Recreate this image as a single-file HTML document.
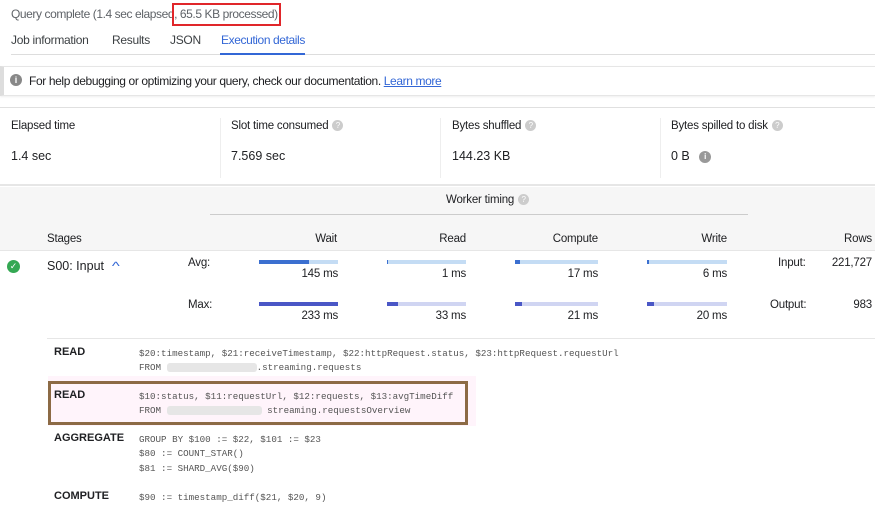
<!DOCTYPE html>
<html><head><meta charset="utf-8"><style>
*{margin:0;padding:0;box-sizing:border-box}
body{width:875px;height:516px;background:#fff;font-family:"Liberation Sans",sans-serif;color:#202124;position:relative;overflow:hidden}
.a{position:absolute;white-space:nowrap}
.s{font-size:11.5px;letter-spacing:-0.2px}
.m{font-family:"Liberation Mono",monospace;font-size:9.2px;color:#555}
.q{display:inline-block;width:11px;height:11px;border-radius:50%;background:#ccc;color:#fff;font-size:8px;text-align:center;line-height:11px;vertical-align:middle;margin-left:4px}
.bar{position:absolute;height:4px;background:#c4dcf4}
.bar i{position:absolute;left:0;top:0;height:4px;background:#3b6fd0}
.bar2{background:#d0d5f2}.bar2 i{background:#4a57c6}
.r{text-align:right}
.blur{display:inline-block;height:9px;background:#e6e6e6;border-radius:3px;vertical-align:middle}
</style></head><body>
<div class="a" style="left:11px;top:7px;font-size:12px;letter-spacing:-0.42px;color:#5f6368">Query complete (1.4 sec elapsed, 65.5 KB processed)</div>
<div class="a" style="left:172px;top:3px;width:109px;height:23px;border:2px solid #e0262a"></div>
<div class="a" style="left:11px;top:33px;font-size:12px;letter-spacing:-0.3px;color:#3c4043">Job information</div>
<div class="a" style="left:112px;top:33px;font-size:12px;letter-spacing:-0.3px;color:#3c4043">Results</div>
<div class="a" style="left:170px;top:33px;font-size:12px;letter-spacing:-0.3px;color:#3c4043">JSON</div>
<div class="a" style="left:221px;top:33px;font-size:12px;letter-spacing:-0.4px;color:#3367d6">Execution details</div>
<div class="a" style="left:11px;top:54px;width:864px;height:1px;background:#ddd"></div>
<div class="a" style="left:220px;top:53px;width:85px;height:2px;background:#3367d6"></div>
<div class="a" style="left:0;top:66px;width:875px;height:30px;background:#fff;border-top:1px solid #e6e6e6;border-bottom:1px solid #e6e6e6;border-left:4px solid #ddd;box-shadow:0 1px 2px #eee"></div>
<div class="a" style="left:10px;top:74px;width:12px;height:12px;border-radius:50%;background:#888;color:#fff;font-size:9px;text-align:center;line-height:12px;font-weight:bold">i</div>
<div class="a" style="left:29px;top:74px;font-size:12px;letter-spacing:-0.38px">For help debugging or optimizing your query, check our documentation. <span style="color:#3367d6;text-decoration:underline">Learn more</span></div>
<div class="a" style="left:0;top:107px;width:875px;height:79px;border-top:1px solid #e0e0e0;border-bottom:2px solid #e6e6e6"></div>
<div class="a s" style="left:11px;top:120px">Elapsed time</div>
<div class="a" style="left:11px;top:149px;font-size:12.5px">1.4 sec</div>
<div class="a" style="left:220px;top:118px;width:1px;height:60px;background:#eee"></div>
<div class="a s" style="left:231px;top:120px">Slot time consumed<span class="q">?</span></div>
<div class="a" style="left:231px;top:149px;font-size:12.5px">7.569 sec</div>
<div class="a" style="left:440px;top:118px;width:1px;height:60px;background:#eee"></div>
<div class="a s" style="left:452px;top:120px">Bytes shuffled<span class="q">?</span></div>
<div class="a" style="left:452px;top:149px;font-size:12.5px">144.23 KB</div>
<div class="a" style="left:660px;top:118px;width:1px;height:60px;background:#eee"></div>
<div class="a s" style="left:671px;top:120px">Bytes spilled to disk<span class="q">?</span></div>
<div class="a" style="left:671px;top:149px;font-size:12.5px">0 B <span class="q" style="background:#999;width:12px;height:12px;line-height:12px;font-weight:bold;margin-left:6px">i</span></div>
<div class="a" style="left:0;top:187px;width:875px;height:63px;background:#f6f6f6"></div>
<div class="a s" style="left:446px;top:194px">Worker timing<span class="q">?</span></div>
<div class="a" style="left:210px;top:214px;width:538px;height:1px;background:#ccc"></div>
<div class="a s" style="left:47px;top:233px">Stages</div>
<div class="a s r" style="left:280px;top:233px;width:57px">Wait</div>
<div class="a s r" style="left:400px;top:233px;width:66px">Read</div>
<div class="a s r" style="left:500px;top:233px;width:98px">Compute</div>
<div class="a s r" style="left:650px;top:233px;width:77px">Write</div>
<div class="a s r" style="left:800px;top:233px;width:72px">Rows</div>
<div class="a" style="left:0;top:250px;width:875px;height:1px;background:#e6e6e6"></div>
<div class="a" style="left:7px;top:260px;width:13px;height:13px;border-radius:50%;background:#34a853;color:#fff;font-size:9px;text-align:center;line-height:13px">✓</div>
<div class="a" style="left:47px;top:259px;font-size:12.5px">S00: Input <span style="color:#3367d6;font-size:12px;display:inline-block;transform:scaleX(1.4);margin-left:6px">^</span></div>
<div class="a s" style="left:188px;top:257px">Avg:</div>
<div class="a s" style="left:188px;top:299px">Max:</div>
<div class="bar" style="left:259px;top:260px;width:79px"><i style="width:50px"></i></div>
<div class="bar" style="left:387px;top:260px;width:79px"><i style="width:1px"></i></div>
<div class="bar" style="left:515px;top:260px;width:83px"><i style="width:5px"></i></div>
<div class="bar" style="left:647px;top:260px;width:80px"><i style="width:2px"></i></div>
<div class="bar bar2" style="left:259px;top:302px;width:79px"><i style="width:79px"></i></div>
<div class="bar bar2" style="left:387px;top:302px;width:79px"><i style="width:11px"></i></div>
<div class="bar bar2" style="left:515px;top:302px;width:83px"><i style="width:7px"></i></div>
<div class="bar bar2" style="left:647px;top:302px;width:80px"><i style="width:7px"></i></div>
<div class="a s r" style="left:270px;top:268px;width:68px">145 ms</div>
<div class="a s r" style="left:400px;top:268px;width:66px">1 ms</div>
<div class="a s r" style="left:520px;top:268px;width:78px">17 ms</div>
<div class="a s r" style="left:650px;top:268px;width:77px">6 ms</div>
<div class="a s r" style="left:270px;top:310px;width:68px">233 ms</div>
<div class="a s r" style="left:400px;top:310px;width:66px">33 ms</div>
<div class="a s r" style="left:520px;top:310px;width:78px">21 ms</div>
<div class="a s r" style="left:650px;top:310px;width:77px">20 ms</div>
<div class="a s" style="left:778px;top:257px">Input:</div>
<div class="a s r" style="left:800px;top:257px;width:72px">221,727</div>
<div class="a s" style="left:770px;top:299px">Output:</div>
<div class="a s r" style="left:800px;top:299px;width:72px">983</div>
<div class="a" style="left:47px;top:338px;width:828px;height:1px;background:#e6e6e6"></div>
<div class="a" style="left:48px;top:376px;width:428px;height:50px;background:#fff4fb"></div>
<div class="a" style="left:48px;top:381px;width:420px;height:44px;border:3px solid #8c6a45"></div>
<div class="a" style="left:54px;top:346px;font-size:11px;font-weight:bold">READ</div>
<div class="a m" style="left:139px;top:348px">$20:timestamp, $21:receiveTimestamp, $22:httpRequest.status, $23:httpRequest.requestUrl</div>
<div class="a m" style="left:139px;top:362px">FROM <span class="blur" style="width:90px"></span>.streaming.requests</div>
<div class="a" style="left:54px;top:389px;font-size:11px;font-weight:bold">READ</div>
<div class="a m" style="left:139px;top:391px">$10:status, $11:requestUrl, $12:requests, $13:avgTimeDiff</div>
<div class="a m" style="left:139px;top:405px">FROM <span class="blur" style="width:95px"></span> streaming.requestsOverview</div>
<div class="a" style="left:54px;top:432px;font-size:11px;font-weight:bold">AGGREGATE</div>
<div class="a m" style="left:139px;top:434px">GROUP BY $100 := $22, $101 := $23</div>
<div class="a m" style="left:139px;top:448px">$80 := COUNT_STAR()</div>
<div class="a m" style="left:139px;top:463px">$81 := SHARD_AVG($90)</div>
<div class="a" style="left:54px;top:490px;font-size:11px;font-weight:bold">COMPUTE</div>
<div class="a m" style="left:139px;top:492px">$90 := timestamp_diff($21, $20, 9)</div>
</body></html>
